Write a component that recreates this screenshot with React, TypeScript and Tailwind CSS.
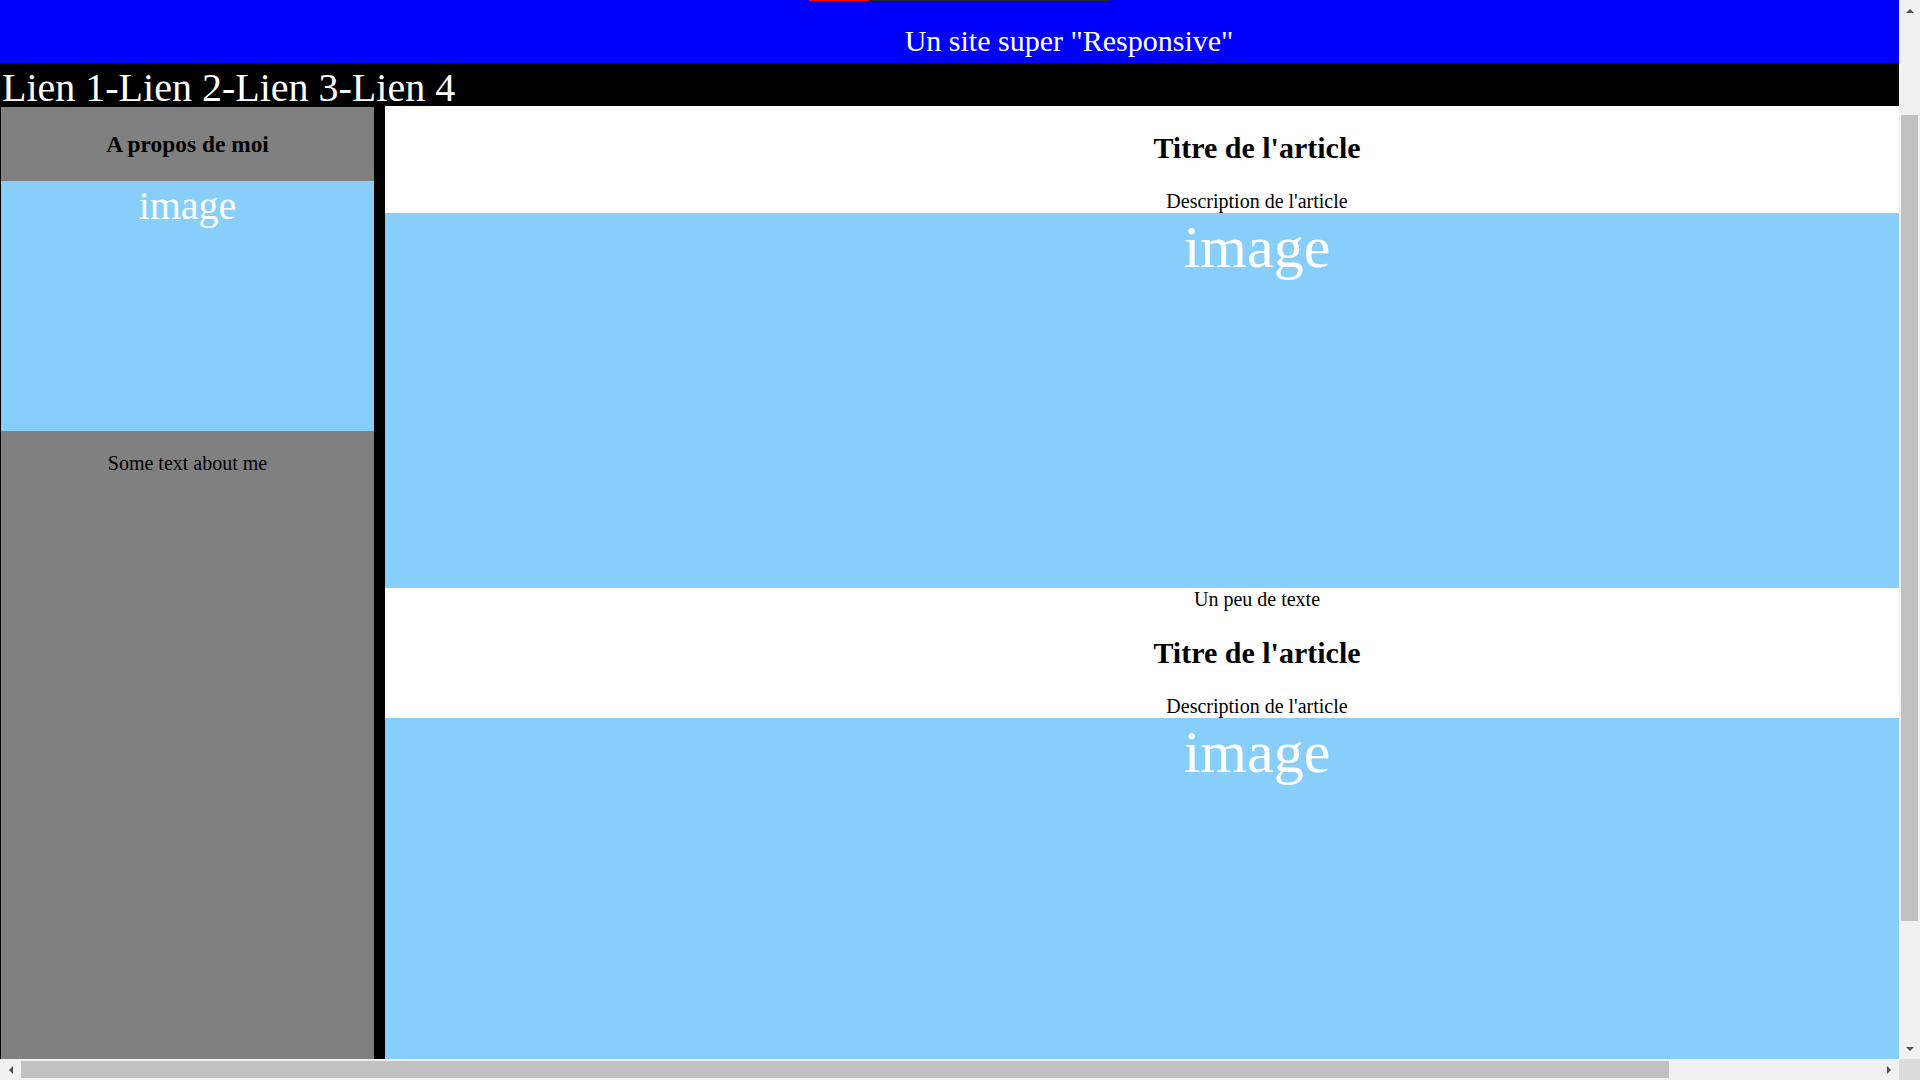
import React from 'react';

const serif = "font-['Liberation_Serif','Times_New_Roman',serif]";

function ArticleBlock({ first }: { first?: boolean }) {
  return (
    <>
      <h2 className="mt-[25px] text-center text-[30px] font-bold leading-[34px] text-black">Titre de l'article</h2>
      <p className="mt-[25px] text-center text-[20px] leading-[23px] text-black">Description de l'article</p>
      <div className="h-[375px] bg-[#87cefa] text-center text-[60px] leading-[69px] text-white">image</div>
      {first && <p className="text-center text-[20px] leading-[23px] text-black">Un peu de texte</p>}
    </>
  );
}

function Arrow({ dir }: { dir: 'up' | 'down' | 'left' | 'right' }) {
  const pts = {
    up: '0,5 4,1 8,5',
    down: '0,1 4,5 8,1',
    left: '5,0 1,4 5,8',
    right: '1,0 5,4 1,8',
  }[dir];
  const vertical = dir === 'up' || dir === 'down';
  return (
    <svg width={vertical ? 8 : 6} height={vertical ? 6 : 8} viewBox={vertical ? '0 0 8 6' : '0 0 6 8'}>
      <polygon points={pts} fill="#505050" />
    </svg>
  );
}

export default function App() {
  return (
    <div className={`w-[1920px] h-[1080px] overflow-hidden grid grid-cols-[1899px_21px] grid-rows-[1059px_21px] ${serif}`}>
      {/* visible page */}
      <div className="overflow-hidden bg-black">
        <div className="w-[2138px] bg-black">
          <header className="h-[63px] bg-[#0000ff]">
            <div className="flex h-[1px] pl-[809px]">
              <div className="w-[60px] bg-[#ff0000]" />
              <div className="w-[241px] bg-[#262626]" />
            </div>
            <h1 className="mt-[23px] text-center text-[30px] font-normal leading-[34px] text-white">
              Un site super "Responsive"
            </h1>
          </header>

          <nav className="h-[43px] bg-black pl-[2px] pt-[2px] text-[40px] leading-[46px] text-white">Lien 1-Lien 2-Lien 3-Lien 4</nav>

          <div className="flex items-stretch">
            <aside className="ml-[1px] mt-[1px] w-[373px] h-[1000px] shrink-0 bg-[#808080]">
              <h3 className="pt-[24px] pb-[24px] text-center text-[23.4px] font-bold leading-[26px] text-black">A propos de moi</h3>
              <div className="h-[250px] bg-[#87cefa] pt-[2px] text-center text-[40px] leading-[46px] text-white">image</div>
              <p className="mt-[21px] text-center text-[20px] leading-[23px] text-black">Some text about me</p>
            </aside>
            <main className="ml-[11px] w-[1744px] shrink-0 bg-white pb-[20px] flow-root">
              <ArticleBlock first />
              <ArticleBlock />
            </main>
          </div>
        </div>
      </div>

      {/* vertical scrollbar */}
      <div className="flex flex-col bg-[#f1f1f1]">
        <div className="flex h-[21px] items-center justify-center"><Arrow dir="up" /></div>
        <div className="flex-1 px-[2px] pt-[94px]">
          <div className="h-[806px] bg-[#c1c1c1]" />
        </div>
        <div className="flex h-[21px] items-center justify-center"><Arrow dir="down" /></div>
      </div>

      {/* horizontal scrollbar */}
      <div className="flex bg-[#f1f1f1]">
        <div className="flex w-[21px] items-center justify-center"><Arrow dir="left" /></div>
        <div className="flex-1 py-[2px]">
          <div className="h-full w-[1648px] bg-[#c1c1c1]" />
        </div>
        <div className="flex w-[21px] items-center justify-center"><Arrow dir="right" /></div>
      </div>

      <div className="bg-[#dcdcdc]" />
    </div>
  );
}
